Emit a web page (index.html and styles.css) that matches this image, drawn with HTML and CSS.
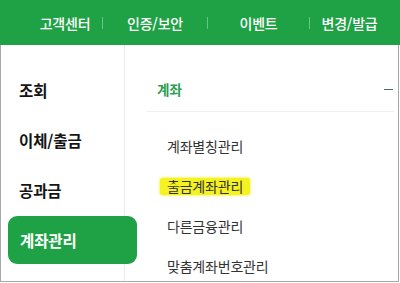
FILE: index.html
```html
<!DOCTYPE html>
<html lang="ko">
<head>
<meta charset="utf-8">
<link rel="stylesheet" href="styles.css">
</head>
<body>
<div class="page">
  <header class="topbar">
    <span class="top-item c1">고객센터</span>
    <span class="sep"></span>
    <span class="top-item c2">인증/보안</span>
    <span class="sep"></span>
    <span class="top-item c3">이벤트</span>
    <span class="sep"></span>
    <span class="top-item c4">변경/발급</span>
  </header>
  <div class="panel">
    <nav class="sidebar">
      <div class="side-item">조회</div>
      <div class="side-item">이체/출금</div>
      <div class="side-item">공과금</div>
      <div class="side-item active">계좌관리</div>
    </nav>
    <section class="content">
      <div class="group-head">
        <span class="group-title">계좌</span>
        <span class="minus"></span>
      </div>
      <ul class="sub-list">
        <li class="sub-item">계좌별칭관리</li>
        <li class="sub-item"><span class="mark">출금계좌관리</span></li>
        <li class="sub-item">다른금융관리</li>
        <li class="sub-item">맞춤계좌번호관리</li>
      </ul>
    </section>
  </div>
</div>
</body>
</html>
```
FILE: styles.css
```css
* { box-sizing: border-box; }
html, body { margin: 0; padding: 0; background: #fff; }
body {
  font-family: "Noto Sans CJK KR", "Noto Sans", sans-serif;
  width: 400px;
  height: 283px;
  overflow: hidden;
}
.page { width: 400px; height: 283px; }
.topbar {
  height: 45px;
  width: 400px;
  background: #1fa246;
  display: flex;
  align-items: center;
  padding-left: 28px;
}
.top-item {
  color: #fff;
  font-size: 14px;
  font-weight: 500;
  text-align: center;
  line-height: 20px;
  letter-spacing: -0.2px;
}
.c1 { width: 74px; }
.c2 { width: 104px; }
.c3 { width: 101px; }
.c4 { width: 79px; }
.sep {
  width: 1px;
  height: 12px;
  background: rgba(255,255,255,0.35);
}
.panel {
  width: 399px;
  height: 237px;
  border: 1px solid #a8a8a8;
  border-top: none;
  display: flex;
  overflow: hidden;
}
.sidebar {
  width: 124px;
  flex: none;
  border-right: 1px solid #ececec;
  padding-top: 21px;
}
.side-item {
  height: 48px;
  margin-bottom: 2px;
  display: flex;
  align-items: center;
  padding-left: 18px;
  font-size: 15.5px;
  font-weight: 700;
  color: #141414;
  letter-spacing: -0.1px;
}
.side-item.active {
  width: 129px;
  margin-left: 7px;
  padding-left: 12px;
  background: #1fa246;
  color: #fff;
  border-radius: 9px;
}
.content {
  flex: 1;
  padding-left: 22px;
  padding-right: 4px;
}
.group-head {
  margin-top: 22px;
  height: 45px;
  border-bottom: 1px solid #f0f0f0;
  display: flex;
  align-items: center;
  justify-content: space-between;
  padding-left: 10px;
  padding-right: 1px;
}
.group-title {
  color: #2c9c52;
  font-size: 13.5px;
  font-weight: 700;
}
.minus {
  width: 9px;
  height: 1px;
  background: #556b5e;
}
.sub-list {
  list-style: none;
  margin: 0;
  padding: 14px 0 0 20px;
}
.sub-item {
  height: 40px;
  display: flex;
  align-items: center;
  font-size: 14px;
  color: #333;
  letter-spacing: -0.2px;
}
.mark {
  display: inline-block;
  margin-left: -7px;
  padding: 0 7px;
  line-height: 17px;
  background: #f4f221;
  border-radius: 3px;
  box-shadow: 0 0 2px 1px rgba(244,242,33,0.6);
}
```
